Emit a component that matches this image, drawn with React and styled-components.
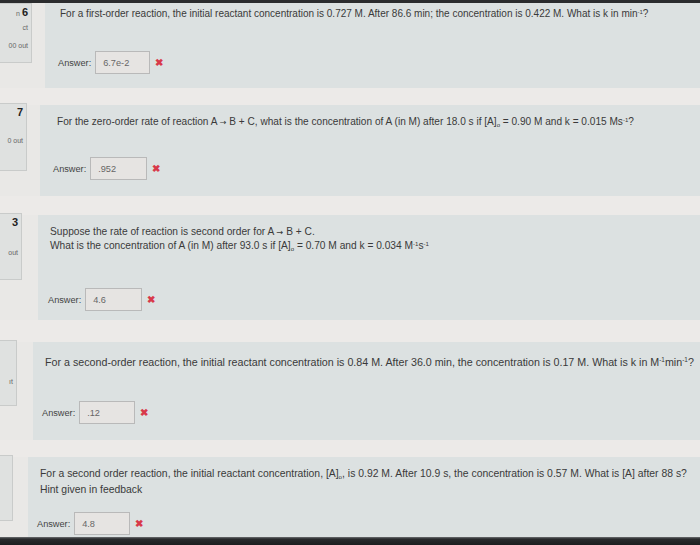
import React from "react";
import styled, { createGlobalStyle } from "styled-components";

const Global = createGlobalStyle`
  html, body {
    margin: 0;
    padding: 0;
    width: 700px;
    height: 545px;
    overflow: hidden;
    background: #e9e8e6;
    font-family: "Liberation Sans", Arial, sans-serif;
    color: #3b3b3b;
  }
`;

const Page = styled.div`
  width: 700px;
  height: 545px;
  display: flex;
  flex-direction: column;
  background: #e9e8e6;
  overflow: hidden;
`;

const TopBar = styled.div`
  height: 3px;
  background: #2b2c2e;
  flex-shrink: 0;
`;

const BottomBar = styled.div`
  flex: 1;
  min-height: 8px;
  background: linear-gradient(#6d6f71 0, #2a2b2d 2px, #1c1d1f 100%);
`;

const Strip = styled.div`
  height: ${(p) => p.h}px;
  flex-shrink: 0;
  background: #eceae8;
`;

const Row = styled.div`
  display: flex;
  flex-shrink: 0;
`;

const Info = styled.div`
  width: ${(p) => p.w}px;
  height: ${(p) => p.h}px;
  margin-top: ${(p) => p.mt}px;
  box-sizing: border-box;
  background: #dfe1e0;
  border: 1px solid #c9cbca;
  border-left: none;
  display: flex;
  flex-direction: column;
  align-items: flex-end;
  padding: 2px 3px 0 0;
  font-size: 7px;
  color: #666;
  overflow: hidden;
  white-space: nowrap;
`;

const QNum = styled.div`
  font-size: 11px;
  color: #222;
  font-weight: bold;
  line-height: 12px;
  span {
    font-size: 7px;
    font-weight: normal;
    color: #666;
    margin-right: 2px;
  }
`;

const InfoLine = styled.div`
  margin-top: ${(p) => p.mt || 8}px;
  line-height: 9px;
`;

const Content = styled.div`
  flex: 1;
  margin-left: ${(p) => p.gap}px;
  height: ${(p) => p.h}px;
  box-sizing: border-box;
  background: #dce1e1;
  padding: ${(p) => p.pt}px 0 0 ${(p) => p.pl}px;
  display: flex;
  flex-direction: column;
  overflow: hidden;
`;

const Text = styled.div`
  font-size: ${(p) => p.fs}px;
  line-height: ${(p) => p.lh}px;
  white-space: nowrap;
  color: #3a3a3a;
  sup {
    font-size: 0.6em;
    line-height: 0;
    vertical-align: 0.55em;
  }
  sub {
    font-size: 0.6em;
    line-height: 0;
    vertical-align: -0.25em;
  }
`;

const Arrow = styled.span`
  font-family: "DejaVu Sans", sans-serif;
  font-size: 0.8em;
`;

const AnswerRow = styled.div`
  display: flex;
  align-items: center;
  margin-top: ${(p) => p.mt}px;
  margin-left: ${(p) => p.ml}px;
  font-size: 9.2px;
  color: #444;
`;

const Field = styled.div`
  width: ${(p) => p.w}px;
  height: 23px;
  box-sizing: border-box;
  margin-left: 4px;
  border: 1px solid #b9b9b9;
  background: #e6e4e2;
  display: flex;
  align-items: center;
  padding-left: 7px;
  color: #666;
  font-size: 9.2px;
`;

const Cross = styled.span`
  color: #d8394a;
  font-weight: bold;
  font-size: 10px;
  margin-left: 5px;
`;

function Question({ info, infoW, infoH, infoMt, gap, h, pt, pl, fs, lh, ansMt, ansMl, fieldW, value, children }) {
  return (
    <Row>
      <Info w={infoW} h={infoH} mt={infoMt}>
        {info}
      </Info>
      <Content gap={gap} h={h} pt={pt} pl={pl}>
        <Text fs={fs} lh={lh}>{children}</Text>
        <AnswerRow mt={ansMt} ml={ansMl}>
          Answer:
          <Field w={fieldW}>{value}</Field>
          <Cross>✖</Cross>
        </AnswerRow>
      </Content>
    </Row>
  );
}

export default function App() {
  return (
    <Page>
      <Global />
      <TopBar />
      <Question
        info={
          <>
            <QNum><span>n</span>6</QNum>
            <InfoLine mt={3}>ct</InfoLine>
            <InfoLine mt={9}>00 out</InfoLine>
          </>
        }
        infoW={32} infoH={60} infoMt={0}
        gap={13} h={85} pt={5} pl={15} fs={10} lh={12}
        ansMt={31} ansMl={-2} fieldW={55} value="6.7e-2"
      >
        For a first-order reaction, the initial reactant concentration is 0.727 M. After 86.6 min; the concentration is 0.422 M. What is k in min<sup>-1</sup>?
      </Question>
      <Strip h={17} />
      <Question
        info={
          <>
            <QNum>7</QNum>
            <InfoLine mt={18}>0 out</InfoLine>
          </>
        }
        infoW={27} infoH={68} infoMt={-2}
        gap={13} h={91} pt={11} pl={17} fs={10.1} lh={12}
        ansMt={29} ansMl={-4} fieldW={57} value=".952"
      >
        For the zero-order rate of reaction A <Arrow>→</Arrow> B + C, what is the concentration of A (in M) after 18.0 s if [A]<sub>o</sub> = 0.90 M and k = 0.015 Ms<sup>-1</sup>?
      </Question>
      <Strip h={19} />
      <Question
        info={
          <>
            <QNum>3</QNum>
            <InfoLine mt={20}>out</InfoLine>
          </>
        }
        infoW={22} infoH={67} infoMt={-2}
        gap={16} h={105} pt={10} pl={12} fs={10.2} lh={13}
        ansMt={36} ansMl={-2} fieldW={57} value="4.6"
      >
        Suppose the rate of reaction is second order for A <Arrow>→</Arrow> B + C.
        <br />
        What is the concentration of A (in M) after 93.0 s if [A]<sub>o</sub> = 0.70 M and k = 0.034 M<sup>-1</sup>s<sup>-1</sup>
      </Question>
      <Strip h={22} />
      <Question
        info={
          <>
            <QNum>&nbsp;</QNum>
            <InfoLine mt={22}>ıt</InfoLine>
          </>
        }
        infoW={17} infoH={66} infoMt={-2}
        gap={16} h={98} pt={14} pl={12} fs={10.7} lh={12}
        ansMt={33} ansMl={-3} fieldW={56} value=".12"
      >
        For a second-order reaction, the initial reactant concentration is 0.84 M. After 36.0 min, the concentration is 0.17 M. What is k in M<sup>-1</sup>min<sup>-1</sup>?
      </Question>
      <Strip h={17} />
      <Question
        info={null}
        infoW={13} infoH={66} infoMt={-2}
        gap={15} h={80} pt={9} pl={12} fs={10.4} lh={16}
        ansMt={14} ansMl={-3} fieldW={56} value="4.8"
      >
        For a second order reaction, the initial reactant concentration, [A]<sub>o</sub>, is 0.92 M. After 10.9 s, the concentration is 0.57 M. What is [A] after 88 s?
        <br />
        Hint given in feedback
      </Question>
      <BottomBar />
    </Page>
  );
}
